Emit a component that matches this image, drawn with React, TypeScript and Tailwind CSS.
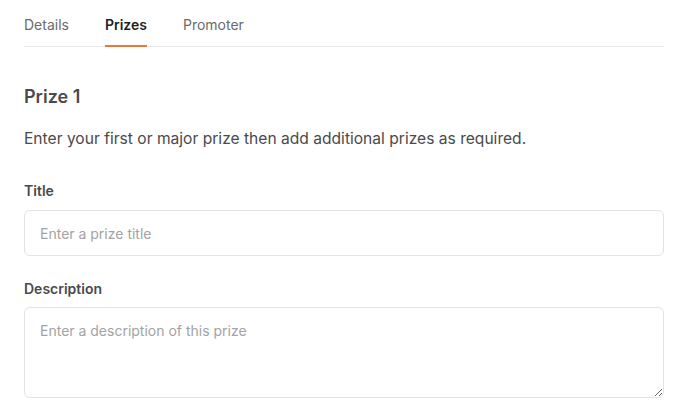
import { useState } from "react";

const tabs = ["Details", "Prizes", "Promoter"];

const App = () => {
  const [active, setActive] = useState("Prizes");

  return (
    <div className="min-h-screen bg-white px-6 font-['Inter',sans-serif] text-[#3f3f3f]">
      <div className="flex gap-[36px] border-b border-[#e6e6e6]">
        {tabs.map((tab) => (
          <button
            key={tab}
            onClick={() => setActive(tab)}
            className={`-mb-px border-b-2 pt-[15px] pb-[10px] text-[14px] leading-[20px] ${
              active === tab
                ? "border-[#e8773a] font-semibold text-[#1f1f1f]"
                : "border-transparent text-[#6b6b6b]"
            }`}
          >
            {tab}
          </button>
        ))}
      </div>

      <h2 className="mt-[38px] text-[18px] font-semibold leading-[24px] text-[#4a4a4a]">Prize 1</h2>
      <p className="mt-[18px] text-[15.6px] leading-[24px] text-[#4a4a4a]">
        Enter your first or major prize then add additional prizes as required.
      </p>

      <label className="mt-[30px] block text-[14px] font-semibold leading-[20px] text-[#4a4a4a]">Title</label>
      <input
        placeholder="Enter a prize title"
        className="mt-[9px] block h-[46px] w-full rounded-md border border-[#e3e3e3] px-[15px] text-[14px] placeholder:text-[#a3a3a3] outline-none"
      />

      <label className="mt-[23px] block text-[14px] font-semibold leading-[20px] text-[#4a4a4a]">Description</label>
      <textarea
        placeholder="Enter a description of this prize"
        className="mt-[8px] block h-[91px] w-full rounded-md border border-[#e3e3e3] px-[15px] py-[12px] text-[14px] placeholder:text-[#a3a3a3] outline-none"
      />
    </div>
  );
};

export default App;
